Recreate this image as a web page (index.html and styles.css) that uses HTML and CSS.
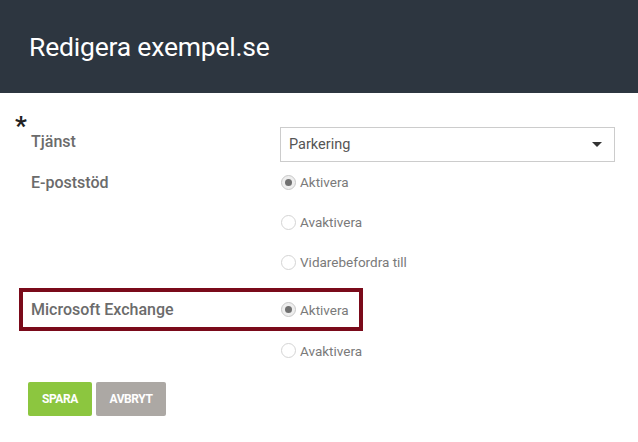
FILE: index.html
```html
<!DOCTYPE html>
<html>
<head>
  <title>Redigera exempel.se</title>
  <link rel="stylesheet" href="styles.css">
</head>
<body>
  <div class="header">
    <h1>Redigera exempel.se</h1>
  </div>

  <form class="edit-form">
    <span class="required">*</span>

    <div class="form-row">
      <label class="field-label">Tjänst</label>
      <div class="select-box">
        <span>Parkering</span>
        <span class="caret"></span>
      </div>
    </div>

    <div class="form-row">
      <label class="field-label">E-poststöd</label>
      <div class="options">
        <div class="radio checked"><span class="dot"></span>Aktivera</div>
        <div class="radio"><span class="dot"></span>Avaktivera</div>
        <div class="radio"><span class="dot"></span>Vidarebefordra till</div>
      </div>
    </div>

    <div class="form-row highlight">
      <label class="field-label">Microsoft Exchange</label>
      <div class="radio checked"><span class="dot"></span>Aktivera</div>
    </div>
    <div class="form-row">
      <span></span>
      <div class="radio last"><span class="dot"></span>Avaktivera</div>
    </div>

    <div class="buttons">
      <button type="button" class="btn btn-save">SPARA</button>
      <button type="button" class="btn btn-cancel">AVBRYT</button>
    </div>
  </form>
</body>
</html>
```

FILE: styles.css
```css
body { margin: 0; font-family: Roboto, "Open Sans", sans-serif; background: #fff; }

.header {
  height: 93px;
  background: #2d3640;
  display: flex;
  align-items: center;
  padding-left: 29px;
}
.header h1 {
  margin: 0;
  color: #fff;
  font-weight: 400;
  font-size: 26.5px;
  letter-spacing: -0.2px;
}

.edit-form { position: relative; padding: 34px 0 0 19px; }
.required {
  position: absolute;
  left: 15px;
  top: 20px;
  font-size: 26px;
  font-weight: 700;
  color: #222;
  line-height: 1;
}

.form-row {
  display: grid;
  grid-template-columns: 249px 335px;
  border: 4px solid transparent;
  border-top: 0;
  border-bottom: 0;
  padding-left: 8px;
}
.field-label {
  font-size: 16px;
  font-weight: 500;
  color: #6b6b6b;
  line-height: 30px;
}

.select-box {
  height: 35px;
  box-sizing: border-box;
  border: 1px solid #ccc;
  display: flex;
  align-items: center;
  justify-content: space-between;
  padding: 0 12px 0 8px;
  font-size: 14.5px;
  color: #555;
}
.caret {
  width: 0; height: 0;
  border-left: 5px solid transparent;
  border-right: 5px solid transparent;
  border-top: 5px solid #333;
}

.radio {
  height: 40px;
  display: flex;
  align-items: center;
  font-size: 13.5px;
  color: #7a7a7a;
  padding-left: 1px;
}
.radio .dot {
  width: 15px; height: 15px;
  box-sizing: border-box;
  border: 1px solid #d4d4d4;
  border-radius: 50%;
  margin-right: 4px;
  position: relative;
  background: #fff;
}
.radio.checked .dot { border-color: #c8c8c8; background: #eee; }
.radio.checked .dot::after {
  content: "";
  position: absolute;
  left: 3px; top: 3px;
  width: 7px; height: 7px;
  border-radius: 50%;
  background: #707070;
}

.form-row:nth-of-type(2) .field-label { line-height: 42px; }

.highlight {
  width: fit-content;
  grid-template-columns: 249px auto;
  border: 4px solid #7a0a1a;
  margin-top: 6px;
  padding-right: 10px;
  align-items: center;
}
.highlight .radio { height: 35px; }
.highlight .field-label { line-height: 35px; }
.radio.last { height: 39px; }

.buttons { display: flex; gap: 4px; margin: 12px 0 0 9px; }
.btn {
  height: 34px;
  border: 0;
  border-radius: 2px;
  color: #fff;
  font-family: Roboto, sans-serif;
  font-weight: 700;
  font-size: 12px;
  letter-spacing: -0.4px;
}
.btn-save { width: 64px; background: #8cc63f; }
.btn-cancel { width: 70px; background: #aca8a4; }
```
